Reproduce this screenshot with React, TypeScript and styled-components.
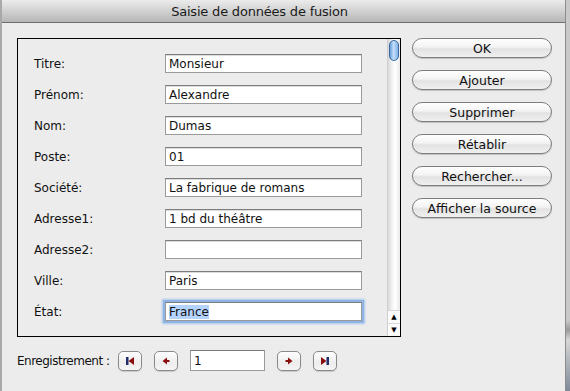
import React from "react";
import styled, {createGlobalStyle} from "styled-components";

const GlobalStyle = createGlobalStyle`
    html, body {
        margin: 0;
        padding: 0;
        background: #8f8f8f;
    }
    body {
        font-family: "DejaVu Sans", "Liberation Sans", sans-serif;
        font-size: 12px;
        color: #111;
    }
`

const Screen = styled.div`
    width: 570px;
    height: 391px;
    display: flex;
    overflow: hidden;
    background: linear-gradient(to bottom, #c9c9c9 0, #c9c9c9 320px, #9a9a9a 330px, #d6d6d6 340px, #7f8a99 391px);
`

const Window = styled.div`
    width: 566px;
    height: 391px;
    display: flex;
    flex-direction: column;
    background: #ececec;
    border-left: 2px solid #a9a9a9;
    border-right: 1px solid #8c8c8c;
    box-sizing: border-box;
`

const TitleBar = styled.div`
    height: 23px;
    flex: none;
    display: flex;
    align-items: center;
    justify-content: center;
    padding-right: 48px;
    box-sizing: border-box;
    background: linear-gradient(to bottom, #ececec, #b6b6b6);
    border-bottom: 1px solid #6f6f6f;
    font-size: 13px;
    color: #1a1a1a;
    letter-spacing: -0.2px;
`

const Body = styled.div`
    flex: 1;
    display: flex;
    padding: 15px 0 0 15px;
    gap: 11px;
`

const LeftColumn = styled.div`
    display: flex;
    flex-direction: column;
`

const RecordPanel = styled.div`
    width: 384px;
    height: 299px;
    box-sizing: border-box;
    border: 1px solid #000;
    display: flex;
    background: #ececec;
`

const Fields = styled.div`
    flex: 1;
    display: flex;
    flex-direction: column;
    gap: 12px;
    padding: 15px 0 0 16px;
`

const FieldRow = styled.div`
    display: flex;
    align-items: center;
    height: 19px;
`

const FieldLabel = styled.div`
    width: 131px;
    padding-top: 1px;
`

const FieldInput = styled.div<{ $focused?: boolean }>`
    width: 197px;
    height: 19px;
    box-sizing: border-box;
    background: #fff;
    border: 1px solid #9a9a9a;
    border-top-color: #7d7d7d;
    box-shadow: ${p => p.$focused ? "0 0 0 2px #8fb4e3, 0 0 2px 3px #a9c6ec" : "inset 0 1px 0 #dcdcdc"};
    padding: 0 3px;
    display: flex;
    align-items: center;
    white-space: nowrap;
`

const Selected = styled.span`
    background: #b5d3ff;
`

const ScrollBar = styled.div`
    width: 12px;
    display: flex;
    flex-direction: column;
    background: linear-gradient(to right, #d9d9d9, #f7f7f7 40%, #ffffff 60%, #e9e9e9);
    border-left: 1px solid #cfcfcf;
`

const Thumb = styled.div`
    margin: 1px 1px 0 1px;
    height: 21px;
    border-radius: 5px;
    border: 1px solid #3b6aa3;
    background: linear-gradient(to right, #6b9ed8, #c6defb 45%, #7fb0e6);
    box-sizing: border-box;
`

const Track = styled.div`
    flex: 1;
`

const ArrowButton = styled.div`
    height: 12px;
    display: flex;
    align-items: center;
    justify-content: center;
    border-top: 1px solid #d8d8d8;
    font-size: 7px;
    color: #000;
    background: #fbfbfb;
`

const NavBar = styled.div`
    display: flex;
    align-items: center;
    margin-top: 13px;
    height: 21px;
`

const NavLabel = styled.div`
    width: 101px;
    letter-spacing: -0.5px;
    white-space: nowrap;
`

const NavButton = styled.div<{ $gap?: number }>`
    width: 24px;
    height: 20px;
    box-sizing: border-box;
    border: 1px solid #8a8a8a;
    border-radius: 5px;
    background: linear-gradient(to bottom, #ffffff, #ededed 60%, #f5f5f5);
    box-shadow: 0 1px 1px rgba(0, 0, 0, 0.15);
    display: flex;
    align-items: center;
    justify-content: center;
    margin-right: ${p => p.$gap ?? 12}px;
`

const RecordInput = styled.div`
    width: 75px;
    height: 21px;
    box-sizing: border-box;
    background: #fff;
    border: 1px solid #9a9a9a;
    border-top-color: #7a7a7a;
    padding: 0 3px;
    display: flex;
    align-items: center;
    margin-right: 12px;
`

const ButtonColumn = styled.div`
    display: flex;
    flex-direction: column;
    gap: 12px;
    padding-top: 0;
`

const PillButton = styled.div`
    width: 140px;
    height: 20px;
    box-sizing: border-box;
    border: 1px solid #7c7c7c;
    border-radius: 10px;
    background: linear-gradient(to bottom, #ffffff 0, #f3f3f3 45%, #e2e2e2 55%, #f0f0f0 100%);
    box-shadow: 0 1px 1px rgba(0, 0, 0, 0.18);
    display: flex;
    align-items: center;
    justify-content: center;
    font-size: 12.5px;
    color: #111;
`

const fields = [
    {label: "Titre:", value: "Monsieur"},
    {label: "Prénom:", value: "Alexandre"},
    {label: "Nom:", value: "Dumas"},
    {label: "Poste:", value: "01"},
    {label: "Société:", value: "La fabrique de romans"},
    {label: "Adresse1:", value: "1 bd du théâtre"},
    {label: "Adresse2:", value: ""},
    {label: "Ville:", value: "Paris"},
    {label: "État:", value: "France", focused: true},
]

const buttons = ["OK", "Ajouter", "Supprimer", "Rétablir", "Rechercher...", "Afficher la source"]

const NAVY = "#1f2f6b";
const RED = "#8a1010";

function NavIcon({kind}: { kind: "first" | "prev" | "next" | "last" }) {
    return (
        <svg width="12" height="12" viewBox="0 0 12 12">
            {kind === "first" && <>
                <rect x="2" y="2" width="2.5" height="8" fill={NAVY}/>
                <polygon points="10,2 4.5,6 10,10" fill={RED}/>
            </>}
            {kind === "prev" && <>
                <polygon points="7,2.5 2.5,6 7,9.5" fill={RED}/>
                <rect x="6" y="5" width="3.5" height="2" fill={RED}/>
            </>}
            {kind === "next" && <>
                <polygon points="5,2.5 9.5,6 5,9.5" fill={RED}/>
                <rect x="2.5" y="5" width="3.5" height="2" fill={RED}/>
            </>}
            {kind === "last" && <>
                <polygon points="2,2 7.5,6 2,10" fill={RED}/>
                <rect x="7.5" y="2" width="2.5" height="8" fill={NAVY}/>
            </>}
        </svg>
    );
}

export default function App(): React.ReactElement {
    return (
        <>
            <GlobalStyle/>
            <Screen>
                <Window>
                    <TitleBar>Saisie de données de fusion</TitleBar>
                    <Body>
                        <LeftColumn>
                            <RecordPanel>
                                <Fields>
                                    {fields.map(f => (
                                        <FieldRow key={f.label}>
                                            <FieldLabel>{f.label}</FieldLabel>
                                            <FieldInput $focused={f.focused}>
                                                {f.focused ? <Selected>{f.value}</Selected> : f.value}
                                            </FieldInput>
                                        </FieldRow>
                                    ))}
                                </Fields>
                                <ScrollBar>
                                    <Thumb/>
                                    <Track/>
                                    <ArrowButton>▲</ArrowButton>
                                    <ArrowButton>▼</ArrowButton>
                                </ScrollBar>
                            </RecordPanel>
                            <NavBar>
                                <NavLabel>Enregistrement :</NavLabel>
                                <NavButton><NavIcon kind="first"/></NavButton>
                                <NavButton><NavIcon kind="prev"/></NavButton>
                                <RecordInput>1</RecordInput>
                                <NavButton><NavIcon kind="next"/></NavButton>
                                <NavButton><NavIcon kind="last"/></NavButton>
                            </NavBar>
                        </LeftColumn>
                        <ButtonColumn>
                            {buttons.map(b => <PillButton key={b}>{b}</PillButton>)}
                        </ButtonColumn>
                    </Body>
                </Window>
            </Screen>
        </>
    );
}
